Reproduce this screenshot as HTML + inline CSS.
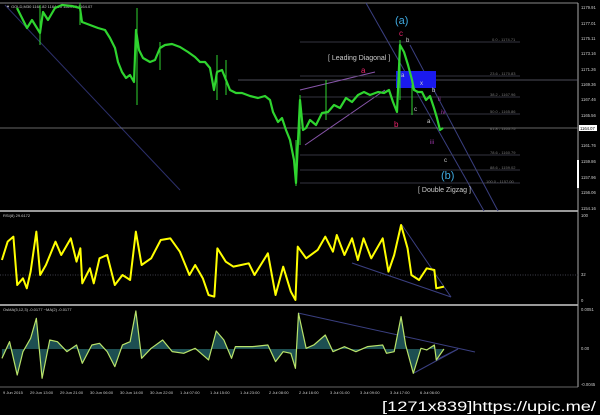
<!DOCTYPE html>
<html><head><style>
html,body{margin:0;padding:0;background:#000;width:600px;height:415px;overflow:hidden}
svg{display:block}
text{font-family:"Liberation Sans",sans-serif}
</style></head><body>
<svg width="600" height="415" viewBox="0 0 600 415" xmlns="http://www.w3.org/2000/svg">
<rect width="600" height="415" fill="#000"/>
<!-- frame lines -->
<line x1="0" y1="3" x2="578" y2="3" stroke="#888" stroke-width="1"/>
<line x1="0" y1="211" x2="578" y2="211" stroke="#999" stroke-width="2"/>
<line x1="0" y1="305" x2="578" y2="305" stroke="#999" stroke-width="2"/>
<line x1="578" y1="3" x2="578" y2="387" stroke="#aaa" stroke-width="1"/>
<!-- main chart -->
<text x="6" y="8" fill="#ccc" font-size="4">▼ GOLD,M30  1164.82 1164.95 1163.75 1164.07</text>
<line x1="5" y1="5" x2="180" y2="190" stroke="#2c2f6a" stroke-width="1"/>
<line x1="366" y1="3" x2="484" y2="211" stroke="#3a3f80" stroke-width="1"/>
<line x1="410" y1="45" x2="498" y2="211" stroke="#3a3f80" stroke-width="1"/>
<line x1="0" y1="128" x2="578" y2="128" stroke="#888" stroke-width="0.8"/>
<line x1="238" y1="80" x2="578" y2="80" stroke="#667" stroke-width="0.8"/>
<line x1="300" y1="90" x2="375" y2="72" stroke="#8855aa" stroke-width="1"/>
<line x1="305" y1="145" x2="385" y2="90" stroke="#8855aa" stroke-width="1"/>
<g stroke="#445" stroke-width="0.8">
<line x1="300" y1="42" x2="520" y2="42"/><line x1="300" y1="76" x2="520" y2="76"/>
<line x1="300" y1="97" x2="520" y2="97"/><line x1="300" y1="114" x2="520" y2="114"/>
<line x1="300" y1="155" x2="520" y2="155"/><line x1="300" y1="170" x2="520" y2="170"/>
<line x1="300" y1="183" x2="520" y2="183"/>
</g>
<g fill="#777" font-size="4">
<text x="492" y="41">0.0 - 1174.71</text><text x="490" y="75">23.6 - 1170.83</text>
<text x="490" y="96">38.2 - 1167.96</text><text x="490" y="113">50.0 - 1165.86</text>
<text x="490" y="130">61.8 - 1163.75</text><text x="490" y="154">78.6 - 1160.79</text>
<text x="490" y="169">88.6 - 1159.02</text><text x="486" y="183">100.0 - 1157.00</text>
</g>
<rect x="396" y="71" width="40" height="17" fill="#1a1aee"/>
<polyline fill="none" stroke="#2fd42f" stroke-width="2.2" stroke-linejoin="round" points="17,8 22,18 27,28 32,20 40,33 43,12 48,20 55,8 62,5 72,6 80,8 82,22 90,25 98,28 105,30 110,38 115,48 118,62 122,72 126,78 130,75 134,82 136,30 139,50 143,58 150,62 155,60 160,48 165,45 172,44 180,47 188,52 195,57 200,62 205,62 210,68 214,90 217,72 222,70 226,80 230,90 236,93 242,93 250,96 258,98 265,96 270,100 273,112 278,122 282,118 286,130 290,140 294,160 296,183 299,120 300,100 303,130 306,128 310,120 316,125 322,113 328,112 334,105 340,108 346,98 352,102 358,95 364,92 370,95 378,92 384,93 389,90 393,102 397,112 400,45 404,52 408,65 412,80 414,90 418,92 422,92 426,100 430,96 434,108 437,118 440,130 443,128"/>
<g stroke="#2fd42f" stroke-width="1">
<line x1="137" y1="8" x2="137" y2="105"/><line x1="160" y1="42" x2="160" y2="70"/>
<line x1="217" y1="55" x2="217" y2="100"/><line x1="226" y1="60" x2="226" y2="95"/>
<line x1="296" y1="140" x2="296" y2="186"/><line x1="300" y1="95" x2="300" y2="145"/>
<line x1="400" y1="40" x2="400" y2="100"/><line x1="412" y1="85" x2="412" y2="115"/>
<line x1="326" y1="80" x2="326" y2="120"/><line x1="40" y1="5" x2="40" y2="45"/>
<line x1="80" y1="3" x2="80" y2="25"/>
</g>
<text x="395" y="24" fill="#3fa9df" font-size="11">(a)</text>
<text x="399" y="36" fill="#e8246b" font-size="8">c</text>
<text x="406" y="42" fill="#ccc" font-size="6">b</text>
<text x="328" y="60" fill="#ccc" font-size="7">[ Leading Diagonal ]</text>
<text x="361" y="73" fill="#e8246b" font-size="8">a</text>
<text x="401" y="77" fill="#ccc" font-size="6">a</text>
<text x="420" y="85" fill="#ccc" font-size="6">x</text>
<text x="432" y="92" fill="#ccc" font-size="6">b</text>
<text x="438" y="101" fill="#a33ab0" font-size="6">ii</text>
<text x="441" y="114" fill="#a33ab0" font-size="6">iv</text>
<text x="414" y="111" fill="#ccc" font-size="6">c</text>
<text x="427" y="123" fill="#ccc" font-size="6">a</text>
<text x="394" y="127" fill="#e8246b" font-size="8">b</text>
<text x="430" y="144" fill="#a33ab0" font-size="6">iii</text>
<text x="444" y="162" fill="#ccc" font-size="6">c</text>
<text x="441" y="179" fill="#3fa9df" font-size="11">(b)</text>
<text x="418" y="192" fill="#ccc" font-size="7">[ Double Zigzag ]</text>
<g fill="#ccc" font-size="4.2">
<text x="581" y="9">1179.91</text><text x="581" y="25">1177.01</text><text x="581" y="40">1175.11</text>
<text x="581" y="55">1173.16</text><text x="581" y="71">1171.26</text><text x="581" y="86">1169.36</text>
<text x="581" y="101">1167.46</text><text x="581" y="117">1165.56</text><text x="581" y="147">1161.76</text>
<text x="581" y="163">1159.86</text><text x="581" y="179">1157.96</text><text x="581" y="194">1156.06</text>
<text x="581" y="210">1154.16</text>
</g>
<rect x="579" y="125" width="18" height="6" fill="#fff"/>
<text x="580" y="130" fill="#000" font-size="4.2">1164.07</text>
<rect x="577" y="160" width="2" height="28" fill="#fff"/>
<!-- RSI -->
<text x="3" y="217" fill="#ccc" font-size="4">RSI(8) 29.6172</text>
<line x1="0" y1="275" x2="578" y2="275" stroke="#556" stroke-width="0.8" stroke-dasharray="1,1.5"/>
<g fill="#ccc" font-size="4.2"><text x="581" y="217">100</text><text x="581" y="276">32</text><text x="581" y="302">0</text></g>
<line x1="352" y1="263" x2="451" y2="297" stroke="#3a3f80" stroke-width="1"/>
<line x1="402" y1="225" x2="451" y2="297" stroke="#3a3f80" stroke-width="1"/>
<g transform="translate(0,205) scale(0.3827,0.3333)">
<polyline fill="none" stroke="#ffff00" stroke-width="2" vector-effect="non-scaling-stroke" stroke-linejoin="round" points="5,165 20,110 35,95 45,240 60,220 70,250 80,200 95,80 105,210 120,180 145,110 160,150 185,100 200,170 210,130 215,235 235,190 245,235 260,160 280,150 300,240 320,210 340,225 355,80 370,180 395,160 420,105 445,100 470,140 495,210 510,180 530,220 545,270 560,275 568,130 590,170 610,185 630,180 650,175 665,210 700,145 720,270 740,185 760,260 772,285 778,125 800,160 830,135 850,95 870,140 880,90 900,150 920,100 935,165 950,100 970,160 1000,100 1015,200 1030,150 1048,60 1065,130 1075,210 1095,225 1115,190 1135,195 1140,250 1160,245"/>
</g>
<!-- OsMA -->
<text x="3" y="311" fill="#ccc" font-size="4">OsMA(5,12,3) -0.0177  ~MA(2) -0.0177</text>
<g fill="#ccc" font-size="4.2"><text x="581" y="311">0.0051</text><text x="581" y="350">0.00</text><text x="581" y="386">-0.0045</text></g>
<line x1="298" y1="313" x2="475" y2="352" stroke="#3a3f80" stroke-width="1"/>
<line x1="414" y1="373" x2="458" y2="349" stroke="#3a3f80" stroke-width="1"/>
<line x1="436" y1="360" x2="458" y2="349" stroke="#3a3f80" stroke-width="1"/>
<g transform="translate(0,205) scale(0.3827,0.3333)">
<polygon fill="#1d4f52" points="5,432 5,460 25,410 45,510 60,440 80,400 95,340 110,520 130,405 150,410 175,440 200,420 215,475 240,420 260,415 280,440 300,485 320,420 340,410 355,318 370,460 395,430 425,405 450,440 480,445 510,430 545,465 565,378 585,405 605,460 615,425 660,425 700,420 720,470 740,440 760,445 772,490 780,325 800,430 820,420 850,390 870,440 900,425 930,440 960,425 1000,420 1010,445 1030,440 1048,335 1060,420 1080,505 1100,430 1115,435 1135,420 1140,465 1160,432"/>
<polyline fill="none" stroke="#b9e36a" stroke-width="1.2" vector-effect="non-scaling-stroke" stroke-linejoin="round" points="5,460 25,410 45,510 60,440 80,400 95,340 110,520 130,405 150,410 175,440 200,420 215,475 240,420 260,415 280,440 300,485 320,420 340,410 355,318 370,460 395,430 425,405 450,440 480,445 510,430 545,465 565,378 585,405 605,460 615,425 660,425 700,420 720,470 740,440 760,445 772,490 780,325 800,430 820,420 850,390 870,440 900,425 930,440 960,425 1000,420 1010,445 1030,440 1048,335 1060,420 1080,505 1100,430 1115,435 1135,420 1140,465 1160,432"/>
</g>
<line x1="0" y1="387" x2="578" y2="387" stroke="#888" stroke-width="0.8"/>
<g fill="#ccc" font-size="4">
<text x="3" y="394">9 Jun 2015</text><text x="30" y="394">29 Jun 13:00</text><text x="60" y="394">29 Jun 21:00</text>
<text x="90" y="394">30 Jun 06:00</text><text x="120" y="394">30 Jun 14:00</text><text x="150" y="394">30 Jun 22:00</text>
<text x="180" y="394">1 Jul 07:00</text><text x="210" y="394">1 Jul 15:00</text><text x="240" y="394">1 Jul 23:00</text>
<text x="269" y="394">2 Jul 08:00</text><text x="299" y="394">2 Jul 16:00</text><text x="330" y="394">3 Jul 01:00</text>
<text x="360" y="394">3 Jul 09:00</text><text x="390" y="394">3 Jul 17:00</text><text x="420" y="394">6 Jul 06:00</text>
</g>
<text x="382" y="411" fill="#fff" font-size="13.5" textLength="214" lengthAdjust="spacingAndGlyphs">[1271x839]https://upic.me/</text>
</svg>
</body></html>
